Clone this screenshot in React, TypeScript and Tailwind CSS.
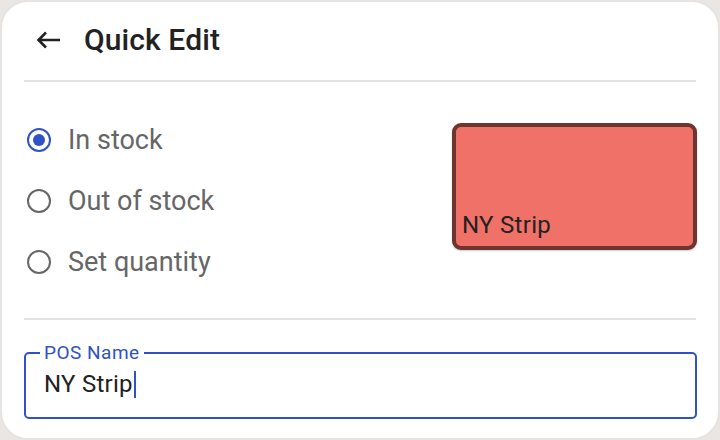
import { useState } from 'react'

type StockOption = 'in' | 'out' | 'qty'

const options: { id: StockOption; label: string }[] = [
  { id: 'in', label: 'In stock' },
  { id: 'out', label: 'Out of stock' },
  { id: 'qty', label: 'Set quantity' }
]

function Radio({ checked }: { checked: boolean }) {
  return (
    <span
      className={
        checked
          ? 'flex h-[24px] w-[24px] items-center justify-center rounded-full border-2 border-[#2f52c4]'
          : 'flex h-[24px] w-[24px] items-center justify-center rounded-full border-2 border-[#666666]'
      }
    >
      {checked ? <span className="h-[12px] w-[12px] rounded-full bg-[#2f52c4]" /> : null}
    </span>
  )
}

export default function App() {
  const [stock, setStock] = useState<StockOption>('in')
  const name = 'NY Strip'

  return (
    <div className="h-[440px] w-[720px] bg-[#e9e6e3] font-['Roboto',sans-serif]">
      <div className="flex h-full w-full flex-col rounded-[28px] border-2 border-[#e6e3e0] bg-white px-[22px]">
        <div className="flex h-[80px] shrink-0 items-center gap-[22px] border-b-2 border-[#e3e3e3] pb-[2px] pl-[12px]">
          <svg width="26" height="20" viewBox="0 0 26 20" className="text-[#222]">
            <path d="M24 10H3M10 2.5 2.5 10 10 17.5" fill="none" stroke="currentColor" strokeWidth="2.6" />
          </svg>
          <h1 className="text-[30px] font-medium leading-none tracking-[0.1px] text-[#222]">Quick Edit</h1>
        </div>

        <div className="flex h-[238px] shrink-0 items-start justify-between border-b-2 border-[#e3e3e3]">
          <div className="flex flex-col gap-[23px] pt-[39px]">
            {options.map((option) => (
              <button
                key={option.id}
                onClick={() => setStock(option.id)}
                className="flex h-[38px] items-center gap-[17px] pl-[3px] text-left"
              >
                <Radio checked={stock === option.id} />
                <span className="text-[27px] leading-none text-[#666666]">{option.label}</span>
              </button>
            ))}
          </div>
          <div className="mr-[-1px] mt-[41px] flex h-[127px] w-[245px] items-end rounded-[9px] border-4 border-[#6e3430] bg-[#f07167] px-[6px] pb-[9px] shadow-[0_1px_2px_rgba(0,0,0,0.2)]">
            <span className="text-[24px] leading-none tracking-[0.3px] text-[#222]">NY Strip</span>
          </div>
        </div>

        <div className="pt-[32px]">
          <div className="relative mr-[-1px] flex h-[67px] items-center rounded-[5px] border-2 border-[#2f52c4] px-[18px] pb-[3px]">
            <span className="absolute -top-[12px] left-[14px] bg-white px-[4px] text-[19px] leading-[22px] tracking-[0.5px] text-[#2f52c4]">
              POS Name
            </span>
            <span className="text-[24px] leading-none tracking-[0.25px] text-[#222]">{name}</span>
            <span className="ml-[1px] h-[27px] w-[2px] bg-[#2f52c4]" />
          </div>
        </div>
      </div>
    </div>
  )
}
